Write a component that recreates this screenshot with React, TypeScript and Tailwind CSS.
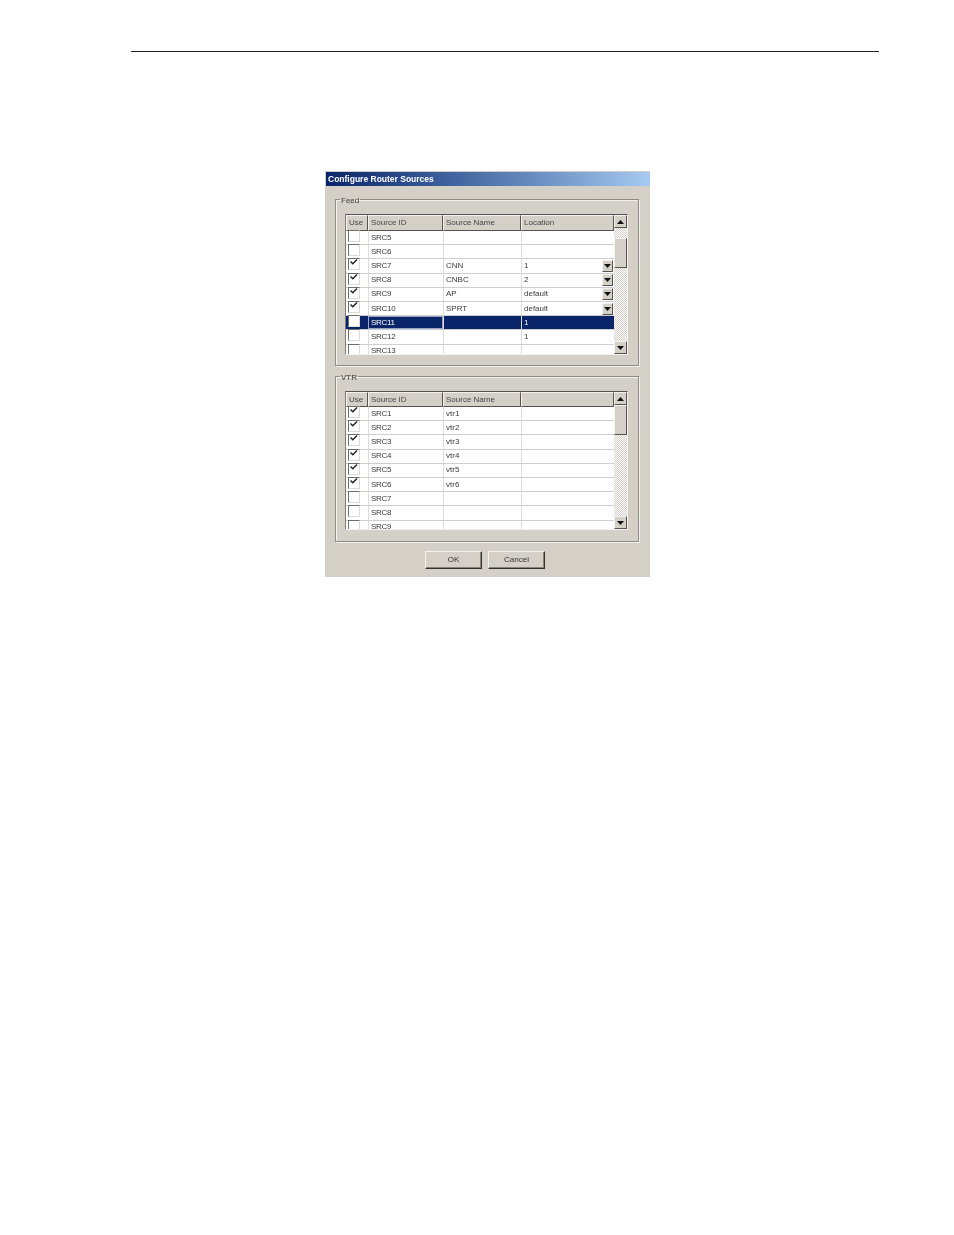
const feedRows = [
  { id: "SRC5", name: "", loc: "" },
  { id: "SRC6", name: "", loc: "" },
  { id: "SRC7", name: "CNN", loc: "1", on: true, drop: true },
  { id: "SRC8", name: "CNBC", loc: "2", on: true, drop: true },
  { id: "SRC9", name: "AP", loc: "default", on: true, drop: true },
  { id: "SRC10", name: "SPRT", loc: "default", on: true, drop: true },
  { id: "SRC11", name: "", loc: "1", selected: true },
  { id: "SRC12", name: "", loc: "1" },
  { id: "SRC13", name: "", loc: "" },
];

const vtrRows = [
  { id: "SRC1", name: "vtr1", loc: "", on: true },
  { id: "SRC2", name: "vtr2", loc: "", on: true },
  { id: "SRC3", name: "vtr3", loc: "", on: true },
  { id: "SRC4", name: "vtr4", loc: "", on: true },
  { id: "SRC5", name: "vtr5", loc: "", on: true },
  { id: "SRC6", name: "vtr6", loc: "", on: true },
  { id: "SRC7", name: "", loc: "" },
  { id: "SRC8", name: "", loc: "" },
  { id: "SRC9", name: "", loc: "" },
];

type Row = {
  id: string;
  name: string;
  loc: string;
  on?: boolean;
  drop?: boolean;
  selected?: boolean;
};

const raised =
  "bg-[#d4d0c8] border border-t-[#f4f2ee] border-l-[#f4f2ee] border-r-[#55534f] border-b-[#55534f]";

function Arrow({ up }: { up?: boolean }) {
  return (
    <svg width="7" height="4" viewBox="0 0 7 4" className="block">
      <path d={up ? "M3.5 0 L7 4 L0 4 Z" : "M0 0 L7 0 L3.5 4 Z"} fill="#111" />
    </svg>
  );
}

function Check({ on }: { on?: boolean }) {
  return (
    <div className="w-[12px] h-[12px] mt-[-3px] ml-[2px] bg-white border border-t-[#6f6d69] border-l-[#6f6d69] border-r-[#dcdad5] border-b-[#dcdad5]">
      {on && (
        <svg width="8" height="6" viewBox="0 0 8 6" className="block ml-[1px]">
          <path d="M0.5 2.5 L2.8 4.8 L7 0.5" fill="none" stroke="#222" strokeWidth="1.4" />
        </svg>
      )}
    </div>
  );
}

function HeaderCell({ label, width }: { label: string; width: string }) {
  return (
    <div className={`${raised} ${width} h-full pl-[2px] flex items-center text-[#444]`}>
      {label}
    </div>
  );
}

function GridRow({ row }: { row: Row }) {
  const text = row.selected ? "text-white" : "text-[#3a3a3a]";
  return (
    <div
      className={`flex h-[14.2px] shrink-0 border-b border-b-[#cfcfcf] items-center ${row.selected ? "bg-[#0a246a]" : "bg-white"} ${text}`}
    >
      <div className="w-[22px] h-full flex items-center">
        <Check on={row.on} />
      </div>
      <div
        className={`w-[75px] h-full pl-[2px] flex items-center tracking-[-0.3px] border-l ${row.selected ? "border border-[#9aa5c4]" : "border-l-[#dedcd7]"}`}
      >
        {row.id}
      </div>
      <div className="w-[78px] h-full pl-[2px] flex items-center border-l border-l-[#dedcd7]">
        {row.name}
      </div>
      <div className="flex-1 h-full pl-[2px] flex items-center justify-between border-l border-l-[#dedcd7]">
        <span>{row.loc}</span>
        {row.drop && (
          <div className={`${raised} w-[11px] h-[12px] flex items-center justify-center mr-px`}>
            <Arrow />
          </div>
        )}
      </div>
    </div>
  );
}

function Scrollbar({ offset }: { offset: string }) {
  return (
    <div className="w-[13px] flex flex-col bg-[repeating-conic-gradient(#d4d0c8_0_25%,#ffffff_0_50%)] bg-[length:2px_2px]">
      <div className={`${raised} h-[13px] shrink-0 flex items-center justify-center`}>
        <Arrow up />
      </div>
      <div className={`${offset} shrink-0`} />
      <div className={`${raised} h-[30px] shrink-0`} />
      <div className="flex-1" />
      <div className={`${raised} h-[13px] shrink-0 flex items-center justify-center`}>
        <Arrow />
      </div>
    </div>
  );
}

function SourceGrid({
  rows,
  lastHeader,
  height,
  headerHeight,
  offset,
}: {
  rows: Row[];
  lastHeader: string;
  height: string;
  headerHeight: string;
  offset: string;
}) {
  return (
    <div className={`flex w-[283px] ${height} border-t border-l border-t-[#55534f] border-l-[#807d77] border-r border-b border-r-[#f4f2ee] border-b-[#f4f2ee]`}>
      <div className="w-[269px] flex flex-col overflow-hidden">
        <div className={`flex ${headerHeight} shrink-0`}>
          <HeaderCell label="Use" width="w-[22px]" />
          <HeaderCell label="Source ID" width="w-[75px]" />
          <HeaderCell label="Source Name" width="w-[78px]" />
          <HeaderCell label={lastHeader} width="flex-1" />
        </div>
        {rows.map((row) => (
          <GridRow key={row.id} row={row} />
        ))}
      </div>
      <Scrollbar offset={offset} />
    </div>
  );
}

function Group({ title, className, children }: { title: string; className: string; children: React.ReactNode }) {
  return (
    <fieldset className={`w-[304px] border border-[#8f8c86] shadow-[1px_1px_0_#f4f2ee,inset_1px_1px_0_#f4f2ee] pl-[9px] ${className}`}>
      <legend className="relative top-px -ml-[5px] px-px leading-[9px] text-[#333]">{title}</legend>
      {children}
    </fieldset>
  );
}

function DialogButton({ label }: { label: string }) {
  return (
    <div className="w-[57px] h-[18px] bg-[#d4d0c8] border border-t-[#f4f2ee] border-l-[#f4f2ee] border-r-[#33312e] border-b-[#33312e] shadow-[inset_-1px_-1px_0_#86837d] flex items-center justify-center text-[#333]">
      {label}
    </div>
  );
}

export default function App() {
  return (
    <div className="min-h-[1235px] bg-white font-['Liberation_Sans',Arial,sans-serif] text-[8px] pt-[51px]">
      <div className="ml-[131px] w-[748px] h-px bg-[#222]" />

      <div className="ml-[325px] mt-[119px] w-[325px] h-[406px] bg-[#d4d0c8] pt-px pl-px blur-[0.25px]">
        <div className="h-[14px] bg-linear-to-r from-[#0a246a] to-[#a6caf0] flex items-center pl-[2px] text-white font-bold text-[8.5px]">
          Configure Router Sources
        </div>

        <div className="pl-[9px] pt-[9px]">
          <Group title="Feed" className="h-[171px] pt-[10px]">
            <SourceGrid rows={feedRows} lastHeader="Location" height="h-[141px]" headerHeight="h-[16px]" offset="h-[10px]" />
          </Group>
          <Group title="VTR" className="h-[170px] mt-[6px] pt-[10px]">
            <SourceGrid rows={vtrRows} lastHeader="" height="h-[139px]" headerHeight="h-[15px]" offset="h-0" />
          </Group>
        </div>

        <div className="flex gap-[6px] ml-[99px] mt-[9px]">
          <DialogButton label="OK" />
          <DialogButton label="Cancel" />
        </div>
      </div>
    </div>
  );
}
